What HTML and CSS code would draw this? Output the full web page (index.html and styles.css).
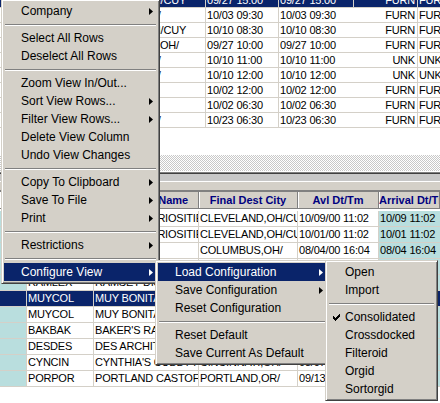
FILE: index.html
```html
<!DOCTYPE html>
<html>
<head>
<meta charset="utf-8">
<link rel="stylesheet" href="styles.css">
</head>
<body>
<div class="app">
  <div class="top-grid">
    <div class="trow sel"><div class="tc c0">CARCUR</div><div class="tc ca">CLEVELAND,OH/CUY</div><div class="tc cb">09/27 15:00</div><div class="tc cc">09/27 15:00</div><div class="tc cd">FURN</div><div class="tc ce">FURN</div></div>
    <div class="trow"><div class="tc c0">COLCOL</div><div class="tc ca">COLUMBUS,OH/</div><div class="tc cb">10/03 09:30</div><div class="tc cc">10/03 09:30</div><div class="tc cd">FURN</div><div class="tc ce">FURN</div></div>
    <div class="trow"><div class="tc c0">CARCUR</div><div class="tc ca">CLEVELAND,OH/CUY</div><div class="tc cb">10/10 08:30</div><div class="tc cc">10/10 08:30</div><div class="tc cd">FURN</div><div class="tc ce">FURN</div></div>
    <div class="trow"><div class="tc c0">YOUYOU</div><div class="tc ca">YOUNGSTOWN,OH/</div><div class="tc cb">09/27 10:00</div><div class="tc cc">09/27 10:00</div><div class="tc cd">FURN</div><div class="tc ce">FURN</div></div>
    <div class="trow"><div class="tc c0">COLCOL</div><div class="tc ca">COLUMBUS,OH/</div><div class="tc cb">10/10 11:00</div><div class="tc cc">10/10 11:00</div><div class="tc cd">UNK</div><div class="tc ce">UNK</div></div>
    <div class="trow"><div class="tc c0">COLCOL</div><div class="tc ca">COLUMBUS,OH/</div><div class="tc cb">10/10 12:00</div><div class="tc cc">10/10 12:00</div><div class="tc cd">UNK</div><div class="tc ce">UNK</div></div>
    <div class="trow"><div class="tc c0">DAYDAY</div><div class="tc ca">DAYTON,OH/</div><div class="tc cb">10/02 12:00</div><div class="tc cc">10/02 12:00</div><div class="tc cd">FURN</div><div class="tc ce">FURN</div></div>
    <div class="trow"><div class="tc c0">DAYDAY</div><div class="tc ca">DAYTON,OH/</div><div class="tc cb">10/02 06:30</div><div class="tc cc">10/02 06:30</div><div class="tc cd">FURN</div><div class="tc ce">FURN</div></div>
    <div class="trow"><div class="tc c0">COLCOL</div><div class="tc ca">COLUMBUS,OH/</div><div class="tc cb">10/23 06:30</div><div class="tc cc">10/23 06:30</div><div class="tc cd">FURN</div><div class="tc ce">FURN</div></div>
  </div>
  <div class="hatch"></div>
  <div class="splitter">
    <div class="sp-bar"></div>
    <div class="sp-bar2"></div>
  </div>
  <div class="bottom-grid">
    <div class="brow bhdr"><div class="bc k0"></div><div class="bc k1">Code</div><div class="bc k2">Customer Name</div><div class="bc k3">Final Dest City</div><div class="bc k4">Avl Dt/Tm</div><div class="bc k5">Arrival Dt/Tm</div></div>
    <div class="brow"><div class="bc k0"></div><div class="bc k1">CARCUR</div><div class="bc k2">CAROLS CURIOSITIES</div><div class="bc k3">CLEVELAND,OH/CUY</div><div class="bc k4">10/09/00 11:02</div><div class="bc k5">10/09 11:02</div></div>
    <div class="brow"><div class="bc k0"></div><div class="bc k1">CARCUR</div><div class="bc k2">CAROLS CURIOSITIES</div><div class="bc k3">CLEVELAND,OH/CUY</div><div class="bc k4">10/01/00 11:02</div><div class="bc k5">10/01 11:02</div></div>
    <div class="brow"><div class="bc k0"></div><div class="bc k1">COLCOL</div><div class="bc k2">COL CO</div><div class="bc k3">COLUMBUS,OH/</div><div class="bc k4">08/04/00 16:04</div><div class="bc k5">08/04 16:04</div></div>
    <div class="brow"><div class="bc k0"></div><div class="bc k1">RAMLEX</div><div class="bc k2">RAMSEY DISTRIBUTORS</div><div class="bc k3">LEXINGTON,KY/</div><div class="bc k4">09/13/00 10:15</div><div class="bc k5">09/13 10:15</div></div>
    <div class="brow"><div class="bc k0"></div><div class="bc k1">RAMLEX</div><div class="bc k2">RAMSEY DISTRIBUTORS</div><div class="bc k3">LEXINGTON,KY/</div><div class="bc k4">09/14/00 10:15</div><div class="bc k5">09/14 10:15</div></div>
    <div class="brow sel"><div class="bc k0"></div><div class="bc k1">MUYCOL</div><div class="bc k2">MUY BONITA IMPORTS</div><div class="bc k3">COLUMBUS,OH/</div><div class="bc k4">08/21/00 09:40</div><div class="bc k5">08/21 09:40</div></div>
    <div class="brow"><div class="bc k0"></div><div class="bc k1">MUYCOL</div><div class="bc k2">MUY BONITA IMPORTS</div><div class="bc k3">COLUMBUS,OH/</div><div class="bc k4">08/22/00 09:40</div><div class="bc k5">08/22 09:40</div></div>
    <div class="brow"><div class="bc k0"></div><div class="bc k1">BAKBAK</div><div class="bc k2">BAKER'S RACK</div><div class="bc k3">BAKERSFIELD,CA/</div><div class="bc k4">08/30/00 14:20</div><div class="bc k5">08/30 14:20</div></div>
    <div class="brow"><div class="bc k0"></div><div class="bc k1">DESDES</div><div class="bc k2">DES ARCHITECTURAL</div><div class="bc k3">DES MOINES,IA/</div><div class="bc k4">09/05/00 08:00</div><div class="bc k5">09/05 08:00</div></div>
    <div class="brow"><div class="bc k0"></div><div class="bc k1">CYNCIN</div><div class="bc k2">CYNTHIA'S CUBBY HOLE</div><div class="bc k3">CINCINNATI,OH/</div><div class="bc k4">08/07/00 13:30</div><div class="bc k5">08/07 13:30</div></div>
    <div class="brow"><div class="bc k0"></div><div class="bc k1">PORPOR</div><div class="bc k2">PORTLAND CASTOFFS</div><div class="bc k3">PORTLAND,OR/</div><div class="bc k4">09/13/00 11:45</div><div class="bc k5">09/13 11:45</div></div>
  </div>
</div>

<div class="menu m-main">
  <div class="mi">Company<svg class="arr" width="4" height="7" viewBox="0 0 4 7"><path d="M0 0L4 3.5L0 7Z"/></svg></div>
  <div class="sep"></div>
  <div class="mi">Select All Rows</div>
  <div class="mi">Deselect All Rows</div>
  <div class="sep"></div>
  <div class="mi">Zoom View In/Out...</div>
  <div class="mi">Sort View Rows...<svg class="arr" width="4" height="7" viewBox="0 0 4 7"><path d="M0 0L4 3.5L0 7Z"/></svg></div>
  <div class="mi">Filter View Rows...<svg class="arr" width="4" height="7" viewBox="0 0 4 7"><path d="M0 0L4 3.5L0 7Z"/></svg></div>
  <div class="mi">Delete View Column</div>
  <div class="mi">Undo View Changes</div>
  <div class="sep"></div>
  <div class="mi">Copy To Clipboard<svg class="arr" width="4" height="7" viewBox="0 0 4 7"><path d="M0 0L4 3.5L0 7Z"/></svg></div>
  <div class="mi">Save To File<svg class="arr" width="4" height="7" viewBox="0 0 4 7"><path d="M0 0L4 3.5L0 7Z"/></svg></div>
  <div class="mi">Print<svg class="arr" width="4" height="7" viewBox="0 0 4 7"><path d="M0 0L4 3.5L0 7Z"/></svg></div>
  <div class="sep"></div>
  <div class="mi">Restrictions<svg class="arr" width="4" height="7" viewBox="0 0 4 7"><path d="M0 0L4 3.5L0 7Z"/></svg></div>
  <div class="sep"></div>
  <div class="mi hl">Configure View<svg class="arr" width="4" height="7" viewBox="0 0 4 7"><path d="M0 0L4 3.5L0 7Z"/></svg></div>
</div>

<div class="menu m-sub1">
  <div class="mi hl">Load Configuration<svg class="arr" width="4" height="7" viewBox="0 0 4 7"><path d="M0 0L4 3.5L0 7Z"/></svg></div>
  <div class="mi">Save Configuration<svg class="arr" width="4" height="7" viewBox="0 0 4 7"><path d="M0 0L4 3.5L0 7Z"/></svg></div>
  <div class="mi">Reset Configuration</div>
  <div class="sep"></div>
  <div class="mi">Reset Default</div>
  <div class="mi">Save Current As Default</div>
</div>

<div class="menu m-sub2">
  <div class="mi">Open</div>
  <div class="mi">Import</div>
  <div class="sep"></div>
  <div class="mi checked"><svg class="chk" width="7" height="7" viewBox="0 0 7 7"><path d="M0 2h1v1h1v1h1v-1h1v-1h1v-1h1v-1h1v3h-1v1h-1v1h-1v1h-1v1h-1v-1h-1v-1h-1z"/></svg>Consolidated</div>
  <div class="mi">Crossdocked</div>
  <div class="mi">Filteroid</div>
  <div class="mi">Orgid</div>
  <div class="mi">Sortorgid</div>
</div>
</body>
</html>
```
FILE: styles.css
```css
html, body {
  margin: 0;
  padding: 0;
}
body {
  width: 440px;
  height: 403px;
  overflow: hidden;
  position: relative;
  background: #fff;
  font-family: "Liberation Sans", Arial, sans-serif;
  font-size: 11px;
  color: #000;
}
.app {
  width: 440px;
  height: 403px;
  overflow: hidden;
  letter-spacing: -0.2px;
}

/* ---------- top grid ---------- */
.top-grid {
  margin-top: -7px;
  height: 162px;
  background: #fff;
}
.trow {
  display: flex;
  height: 14px;
  line-height: 14px;
  border-bottom: 1px solid #d4d0c8;
}
.tc {
  flex: none;
  box-sizing: border-box;
  border-right: 1px solid #d4d0c8;
  overflow: hidden;
  white-space: nowrap;
  padding-left: 1px;
}
.c0 { width: 77px; }
.ca { width: 129px; }
.cb { width: 73px; }
.cc { width: 75px; border-right-color: #fff; }
.cd { width: 64px; text-align: right; padding-right: 2px; }
.ce { flex: 1; border-right: none; }
.trow.sel { background: #0a246a; color: #fff; }
.trow.sel .cc { border-right-color: #d4d0c8; }

/* ---------- splitter area ---------- */
.hatch {
  height: 16px;
  background-image: conic-gradient(#c8c8c8 25%, #fff 0 50%, #c8c8c8 0 75%, #fff 0);
  background-size: 2px 2px;
}
.splitter {
  height: 21px;
  background: #c8c8c8;
  box-sizing: border-box;
  border-top: 1px solid #fff;
}
.sp-bar {
  height: 2px;
  border-top: 1px solid #808080;
  border-bottom: 1px solid #404040;
  box-sizing: border-box;
}
.sp-bar2 {
  height: 18px;
  box-sizing: border-box;
  border-top: 7px solid #c8c8c8;
  border-bottom: 2px solid #808080;
  box-shadow: inset 0 1px 0 #fff;
  background: #d4d0c8;
}

/* ---------- bottom grid ---------- */
.brow {
  display: flex;
  height: 15px;
  line-height: 15px;
  border-bottom: 1px solid #d4d0c8;
}
.bc {
  flex: none;
  box-sizing: border-box;
  border-right: 1px solid #d4d0c8;
  overflow: hidden;
  white-space: nowrap;
  padding-left: 1px;
}
.k0 { width: 27px; background: #b9dede; }
.k1 { width: 67px; }
.k2 { width: 105px; }
.k3 { width: 99px; }
.k4 { width: 81px; }
.k5 { flex: 1; background: #b9dede; border-right: none; }
.brow.sel { background: #0a246a; color: #fff; }
.brow.sel .bc { background: #0a246a; }

.bhdr {
  height: 16px;
  line-height: 17px;
  background: #d4d0c8;
  border-bottom: 1px solid #808080;
  margin-bottom: 2px;
  color: #000080;
  font-weight: bold;
  letter-spacing: 0;
}
.bhdr .bc {
  background: #d4d0c8;
  text-align: center;
  padding-left: 0;
  border-right: 1px solid #808080;
  box-shadow: inset 1px 0 0 #fff;
}

/* ---------- menus ---------- */
.menu {
  position: absolute;
  box-sizing: border-box;
  background: #d4d0c8;
  border: 1px solid;
  border-color: #d4d0c8 #404040 #404040 #d4d0c8;
  box-shadow: inset 1px 1px 0 #fff, inset -1px -1px 0 #808080;
  padding: 2px;
  font-size: 12px;
  color: #000;
}
.m-main { left: 1px; top: -1px; width: 159px; }
.m-sub1 { left: 155px; top: 260px; width: 175px; }
.m-sub2 { left: 325px; top: 260px; width: 113px; }

.mi {
  height: 18px;
  line-height: 18px;
  padding-left: 17px;
  padding-right: 4px;
  display: flex;
  align-items: center;
  justify-content: space-between;
  white-space: nowrap;
}
.mi.hl { background: #0a246a; color: #fff; }
.arr { fill: currentColor; flex: none; }
.mi.checked { padding-left: 5px; justify-content: flex-start; }
.chk { fill: #000; flex: none; margin-right: 5px; }

.sep {
  height: 0;
  margin: 4px 1px 3px 1px;
  border-top: 1px solid #808080;
  border-bottom: 1px solid #fff;
}
```
